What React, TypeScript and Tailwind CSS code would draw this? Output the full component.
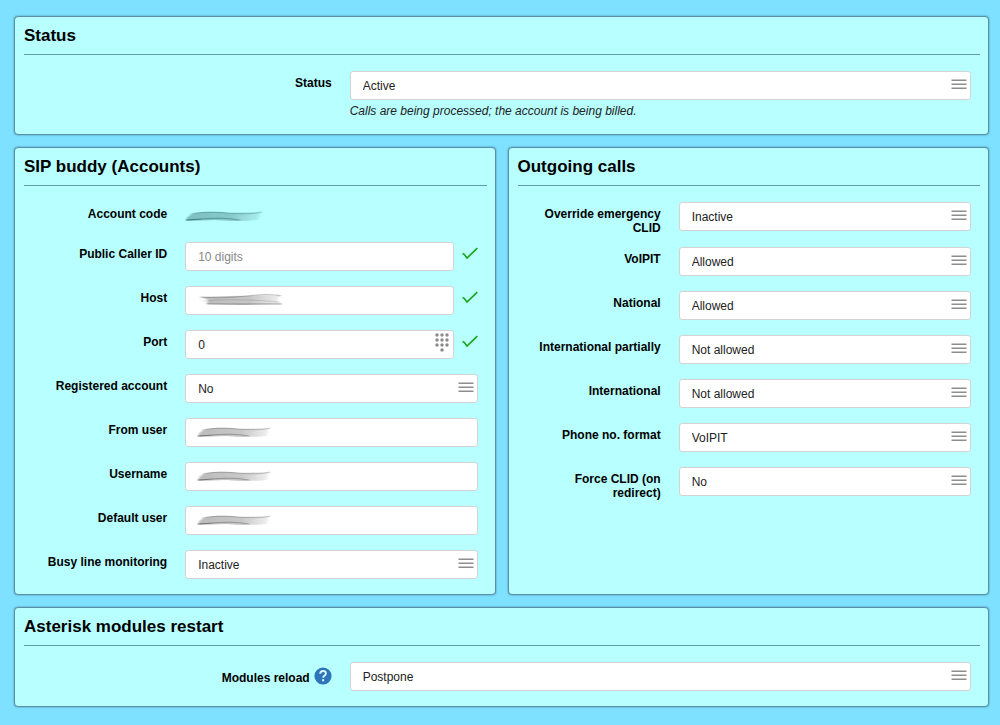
import React, { useId, useState } from 'react';

const controlStyle =
  'block h-[29px] w-full appearance-none rounded-[3px] border border-[#d3d3d3] bg-white px-3 text-xs text-[#222] outline-none focus:border-[#5d93ac]';

interface PanelProps {
  title: string;
  children: React.ReactNode;
}

const Panel: React.FC<PanelProps> = ({ title, children }) => (
  <section className="min-w-0 rounded-[4px] border border-[#5a8fa8] bg-[#b8ffff] pb-3 pl-[9px] pr-2 shadow-[0_0_2px_#4f7f98]">
    <h2 className="mb-4 border-b border-[#5f9db5] text-[17px] font-bold leading-[37px] text-black">{title}</h2>
    <div className="flex flex-col gap-3">{children}</div>
  </section>
);

interface RowProps {
  label: string;
  htmlFor: string;
  help?: boolean;
  short?: boolean;
  children: React.ReactNode;
}

const Row: React.FC<RowProps> = ({ label, htmlFor, help = false, short = false, children }) => (
  <div className={`flex items-start pl-[15px] pr-[9px] ${short ? 'min-h-7' : 'min-h-8'}`}>
    <div className="flex w-1/3 shrink-0 items-start justify-end gap-1 pr-[18px] pt-[5px] text-right text-xs font-bold leading-[14px] text-black">
      <label htmlFor={htmlFor} className={help ? 'pt-1' : ''}>{label}</label>
      {help && (
        <button type="button" aria-label="Help" className="shrink-0">
          <HelpIcon />
        </button>
      )}
    </div>
    <div className="min-w-0 flex-1">{children}</div>
  </div>
);

const HelpIcon = () => (
  <svg width="18" height="18" viewBox="0 0 18 18" aria-hidden="true">
    <circle cx="9" cy="9" r="8.6" fill="#2e74b8" />
    <path d="M6.2 6.7C6.3 4.9 7.4 4 9 4c1.700 0 2.900 1 2.900 2.400 0 1.300-.8 1.800-1.600 2.400-.8.600-1.100 1-1.100 2" fill="none" stroke="#d9f4ff" strokeWidth="1.900" />
    <rect x="8.100" y="12.200" width="2.100" height="2.100" fill="#d9f4ff" />
  </svg>
);

const LinesIcon = () => (
  <svg className="pointer-events-none absolute right-1 top-2 h-3 w-4" viewBox="0 0 16 12" aria-hidden="true">
    <path d="M0.500 1.200h15M0.500 5.200h15M0.500 9.200h15" stroke="#8e8e8e" strokeWidth="1.500" />
  </svg>
);

const KeypadIcon = () => (
  <svg width="14" height="20" viewBox="0 0 14 20" fill="#8a8a8a" aria-hidden="true">
    {[2, 7, 12].map((x) => [2, 7, 12].map((y) => <circle key={`${x}-${y}`} cx={x} cy={y} r="1.700" />))}
    <circle cx="7" cy="17" r="1.700" />
  </svg>
);

const CheckIcon = () => (
  <svg className="mt-[5px] shrink-0" width="16" height="14" viewBox="0 0 16 14" aria-hidden="true">
    <path d="M0.500 6.500L2.200 7.300L5 11L15.300 1.200" fill="none" stroke="#18a218" strokeWidth="1.600" />
  </svg>
);

// Brush stroke that hides a private value
const Smudge: React.FC<{ variant?: 'tinted' | 'scrub' | 'brush'; className?: string }> = ({
  variant = 'brush',
  className = '',
}) => {
  const id = useId();
  const ink = variant === 'tinted' ? '#1f5a60' : '#505050';
  const isScrub = variant === 'scrub';
  return (
    <svg className={className} viewBox="0 0 80 14" preserveAspectRatio="none" aria-hidden="true">
      <defs>
        <linearGradient id={`${id}-fade`}>
          <stop offset="0" stopColor={ink} stopOpacity="0.380" />
          <stop offset="0.600" stopColor={ink} stopOpacity="0.320" />
          <stop offset="1" stopColor={ink} stopOpacity="0.080" />
        </linearGradient>
        <filter id={`${id}-soft`} x="-10%" y="-30%" width="120%" height="160%">
          <feGaussianBlur stdDeviation="1.200 0.700" />
        </filter>
      </defs>
      <g filter={`url(#${id}-soft)`} fill="none" stroke={ink}>
        {isScrub ? (
          <>
            <path d="M2 4L30 3L78 2L74 7L79 11L42 12L7 11L9 7Z" fill={`url(#${id}-fade)`} stroke="none" />
            <path d="M1 4Q24 6 46 3T78 3" strokeOpacity="0.350" />
            <path d="M4 8Q34 5 76 9" strokeOpacity="0.200" />
            <path d="M8 11H79" strokeOpacity="0.500" />
          </>
        ) : (
          <>
            <path d="M1 11Q3 4 18 3Q34 2 46 4L78 3L75 11Q52 13 32 11L1 12Z" fill={`url(#${id}-fade)`} stroke="none" />
            <path d="M6 5Q20 2 44 4T79 3" strokeOpacity="0.350" />
            <path d="M1 11L17 10" strokeOpacity="0.700" />
            <path d="M17 10Q38 8 56 11" strokeOpacity="0.450" />
          </>
        )}
      </g>
    </svg>
  );
};

interface SelectRowProps {
  label: string;
  value: string;
  options: string[];
  help?: boolean;
  hint?: string;
}

const SelectRow: React.FC<SelectRowProps> = ({ label, value, options, help, hint }) => {
  const id = useId();
  const [selected, setSelected] = useState(value);

  return (
    <Row label={label} htmlFor={id} help={help}>
      <div className="relative">
        <select id={id} value={selected} onChange={(e) => setSelected(e.target.value)} className={controlStyle}>
          {options.map((option) => (
            <option key={option}>{option}</option>
          ))}
        </select>
        <LinesIcon />
      </div>
      {hint && <p className="mb-0.5 mt-0.5 text-xs italic leading-[18px] text-[#222]">{hint}</p>}
    </Row>
  );
};

interface InputRowProps {
  label: string;
  value?: string;
  placeholder?: string;
  valid?: boolean;
  keypad?: boolean;
  smudge?: React.ReactNode;
}

const InputRow: React.FC<InputRowProps> = ({ label, value = '', placeholder, valid, keypad, smudge }) => {
  const id = useId();

  return (
    <Row label={label} htmlFor={id}>
      <div className="flex gap-2">
        <div className="relative min-w-0 flex-1">
          <input
            id={id}
            type="text"
            defaultValue={value}
            placeholder={placeholder}
            className={`${controlStyle} placeholder:text-[#888]`}
          />
          {smudge}
          {keypad && (
            <button type="button" aria-label="Open keypad" className="absolute right-[5px] top-[3px]">
              <KeypadIcon />
            </button>
          )}
        </div>
        {valid && <CheckIcon />}
      </div>
    </Row>
  );
};

const activity = ['Active', 'Inactive'];
const permission = ['Allowed', 'Not allowed'];
const yesNo = ['Yes', 'No'];

const App: React.FC = () => (
  <main className="min-h-screen bg-[#7de1ff] pb-4 pl-[14px] pr-[11px] pt-4 font-['Liberation_Sans',Arial,sans-serif]">
    <form className="flex flex-col gap-3" onSubmit={(e) => e.preventDefault()}>
      <Panel title="Status">
        <SelectRow
          label="Status"
          value="Active"
          options={activity}
          hint="Calls are being processed; the account is being billed."
        />
      </Panel>

      <div className="grid grid-cols-2 gap-3">
        <Panel title="SIP buddy (Accounts)">
          <Row label="Account code" htmlFor="account-code" short>
            <output id="account-code" className="block pt-[7px]">
              <Smudge variant="tinted" className="h-[14px] w-[78px]" />
            </output>
          </Row>
          <InputRow label="Public Caller ID" placeholder="10 digits" valid />
          <InputRow
            label="Host"
            valid
            smudge={<Smudge variant="scrub" className="pointer-events-none absolute left-3.5 top-[7px] h-[14px] w-[84px]" />}
          />
          <InputRow label="Port" value="0" valid keypad />
          <SelectRow label="Registered account" value="No" options={yesNo} />
          {['From user', 'Username', 'Default user'].map((label) => (
            <InputRow
              key={label}
              label={label}
              smudge={<Smudge className="pointer-events-none absolute left-3 top-[7px] h-[14px] w-[74px]" />}
            />
          ))}
          <SelectRow label="Busy line monitoring" value="Inactive" options={activity} />
        </Panel>

        <Panel title="Outgoing calls">
          <SelectRow label="Override emergency CLID" value="Inactive" options={activity} />
          <SelectRow label="VoIPIT" value="Allowed" options={permission} />
          <SelectRow label="National" value="Allowed" options={permission} />
          <SelectRow label="International partially" value="Not allowed" options={permission} />
          <SelectRow label="International" value="Not allowed" options={permission} />
          <SelectRow label="Phone no. format" value="VoIPIT" options={['VoIPIT', 'International']} />
          <SelectRow label="Force CLID (on redirect)" value="No" options={yesNo} />
        </Panel>
      </div>

      <Panel title="Asterisk modules restart">
        <SelectRow label="Modules reload" value="Postpone" options={['Postpone', 'Reload now']} help />
      </Panel>
    </form>
  </main>
);

export default App;
